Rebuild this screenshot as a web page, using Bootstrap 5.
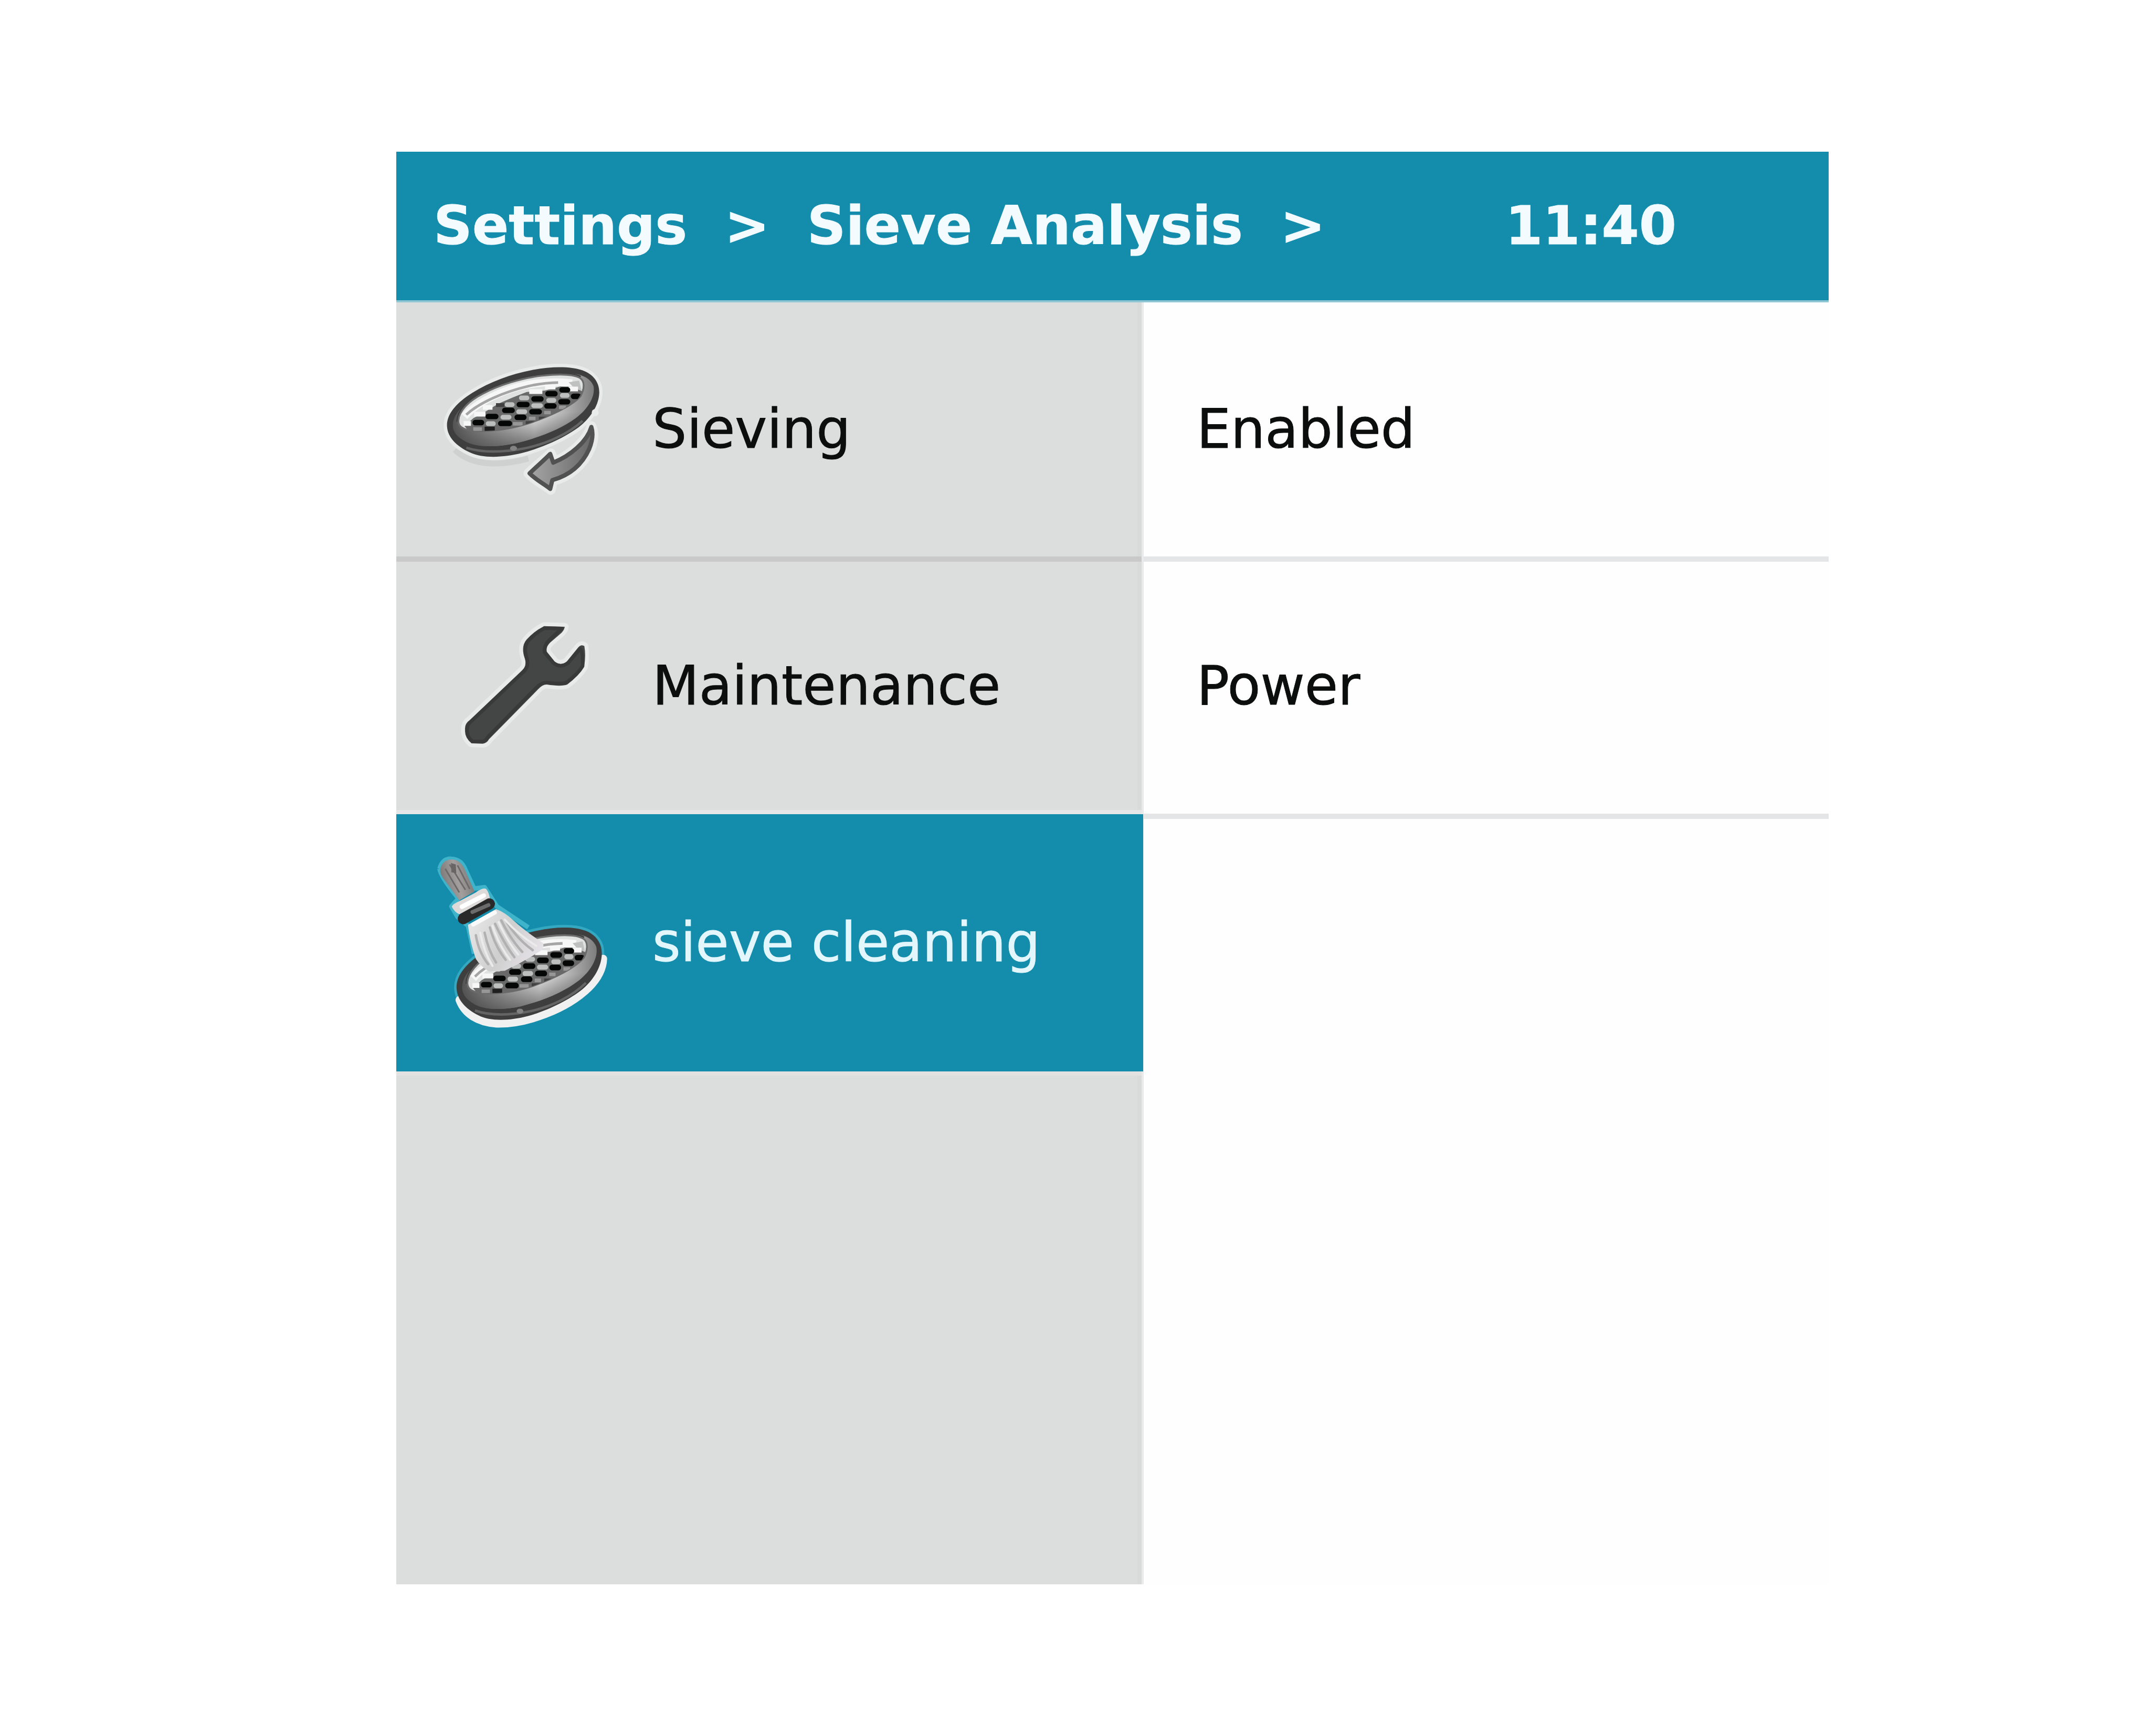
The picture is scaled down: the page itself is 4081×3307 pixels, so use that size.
<!DOCTYPE html>
<html lang="en">
<head>
    <meta charset="UTF-8">
    <meta name="viewport" content="width=device-width, initial-scale=1.0">
    <title>Settings - Sieve Analysis</title>
    <link href="https://cdn.jsdelivr.net/npm/bootstrap@5.3.0/dist/css/bootstrap.min.css" rel="stylesheet">
    <style>
        body {
            font-family: "DejaVu Sans", sans-serif;
            font-size: 103px;
            line-height: 1.2;
            color: #0c0d0d;
            background: #fff;
            padding: 289px 0 0 755px;
            -webkit-text-stroke: 1px currentColor;
        }
        .device-screen {
            width: 2729px;
            height: 2729px;
            background: #fefefe;
        }
        .top-bar {
            height: 287px;
            padding-left: 71px;
            padding-right: 290px;
            font-size: 102.4px;
            color: #f3fbff;
            background: #148dac;
            border-bottom: 4px solid #8fc6d3;
        }
        .crumbs {
            white-space: pre;
        }
        .side-menu {
            width: 1424px;
            background: #dbdedd;
            border-right: 4px solid #e9eaea;
            box-shadow: inset -8px 0 0 #d9dada;
        }
        .menu-row,
        .value-row {
            height: 494px;
            border-bottom: 10px solid #c9c9c9;
        }
        .menu-row svg {
            width: 485px;
            height: 100%;
            margin-right: 3px;
        }
        .menu-row.before-active {
            height: 481px;
            border-bottom: 8px solid #e6e5e8;
        }
        .menu-row.selected {
            height: 490px;
            width: 1423px;
            color: #e2f6fc;
            background: #148dac;
            border-bottom: 0;
        }
        .after-selected {
            height: 8px;
            background: #e3e2e1;
        }
        .value-row {
            padding-left: 101px;
            border-color: #e4e5e6;
        }
        .value-row.second {
            height: 490px;
            padding-bottom: 7px;
        }
    </style>
</head>
<body>
    <div class="device-screen d-flex flex-column">
        <header class="top-bar d-flex align-items-center justify-content-between fw-bold flex-shrink-0">
            <div class="crumbs">Settings  &gt;  Sieve Analysis  &gt;</div>
            <div>11:40</div>
        </header>

        <main class="d-flex flex-grow-1">
            <nav class="side-menu flex-shrink-0">
                <div class="menu-row d-flex align-items-center">
                    <svg viewBox="-195 -282 1455 1452" aria-hidden="true">
                        <defs>
                            <linearGradient id="rim" x1="0" y1="0" x2="1" y2="0">
                                <stop offset="0" stop-color="#525352"/>
                                <stop offset=".3" stop-color="#9a9b9a"/>
                                <stop offset=".58" stop-color="#dcdddc"/>
                                <stop offset=".8" stop-color="#b0b1b0"/>
                                <stop offset="1" stop-color="#7c7d7c"/>
                            </linearGradient>
                            <linearGradient id="rimShade" x1="0" y1="0" x2=".25" y2="1">
                                <stop offset=".7" stop-color="#333" stop-opacity="0"/>
                                <stop offset="1" stop-color="#333" stop-opacity=".5"/>
                            </linearGradient>
                            <linearGradient id="arrowFill" x1="0" y1="0" x2="1" y2="0">
                                <stop offset="0" stop-color="#a4a5a4"/>
                                <stop offset=".5" stop-color="#868786"/>
                                <stop offset="1" stop-color="#666766"/>
                            </linearGradient>
                            <path id="outerRing" d="M95 425C92 350 160 285 240 235C340 172 460 128 580 105C690 83 800 82 868 106C930 128 968 175 965 238C962 300 925 370 850 430C770 490 640 550 520 580C420 604 300 612 225 575C150 540 98 490 95 425Z"/>
                            <path id="opening" d="M160 395C162 340 220 280 300 240C390 192 520 150 640 137C730 127 815 128 855 150C885 170 880 215 858 255C810 310 680 370 560 410C450 445 320 462 225 450C180 440 160 425 160 395Z"/>
                            <clipPath id="openingClip"><use href="#opening"/></clipPath>
                            <!-- sieve pan, shared by both sieve icons -->
                            <g id="sieve">
                                <use href="#outerRing" fill="#3d3e3d"/>
                                <path d="M128 420C130 340 220 275 330 222C460 165 610 128 740 122C840 118 910 140 932 195C945 250 905 325 830 380C740 445 610 495 480 525C380 545 270 548 205 515C155 490 128 460 128 420Z" fill="url(#rim)"/>
                                <path d="M128 420C130 340 220 275 330 222C460 165 610 128 740 122C840 118 910 140 932 195C945 250 905 325 830 380C740 445 610 495 480 525C380 545 270 548 205 515C155 490 128 460 128 420Z" fill="url(#rimShade)"/>
                                <path d="M205 549C310 582 430 573 540 552C670 525 790 468 870 395" fill="none" stroke="#636463" stroke-width="14"/>
                                <ellipse cx="475" cy="552" rx="20" ry="14" fill="#818281"/>
                                <path d="M162 400C160 340 220 280 300 240C390 192 520 150 640 137C730 127 815 128 855 150" fill="none" stroke="#3d3e3d" stroke-width="26"/>
                                <use href="#opening" fill="#e0e2e1" stroke="#6a6b6a" stroke-width="10"/>
                                <g clip-path="url(#openingClip)">
                                    <path d="M195 370C270 285 420 215 560 188C650 172 730 170 810 180" fill="none" stroke="#f6f7f6" stroke-width="44"/>
                                    <path d="M205 360C280 290 420 230 560 197C620 183 680 177 730 176" fill="none" stroke="#a4a5a4" stroke-width="15"/>
                                    <path d="M790 175L850 165L868 235L820 205Z" fill="#bfc1c0"/>
                                    <path d="M195 425L245 380L310 345L390 296L470 262L550 230L655 222L745 198L805 200L890 235L860 320L560 450L240 480Z" fill="#686968"/>
                                    <g stroke="#bdbfbe" stroke-width="27" stroke-linecap="round">
                                        <path d="M330 411h30M414 374h36M504 343h36M590 308h40M676 278h30M520 264h32M438 302h30M754 250h28"/>
                                    </g>
                                    <path d="M250 357h65M300 318h55M565 228h75M655 202h60M745 185h34M190 410h42M790 213h54" stroke="#f6f7f6" stroke-width="27"/>
                                    <path d="M245 442h50M472 412h55M563 381h38M650 348h38M735 318h40" stroke="#969796" stroke-width="20"/>
                                    <g stroke="#050606" stroke-width="31" stroke-linecap="round">
                                        <path d="M256 405h36M330 370h44M425 335h42M508 302h44M592 270h40M672 240h40M752 218h32"/>
                                        <path d="M402 410h50M496 375h38M580 343h42M666 310h40M746 286h38M818 255h28"/>
                                    </g>
                                    <path d="M310 440h58" stroke="#1e1f1e" stroke-width="24"/>
                                    <path d="M375 305h48M545 408h50M620 382h54" stroke="#404140" stroke-width="22"/>
                                    <path d="M855 120C895 170 885 235 840 285" fill="none" stroke="#6c6d6c" stroke-width="16"/>
                                </g>
                            </g>
                        </defs>
                        <path d="M140 560C240 660 420 650 560 610" fill="none" stroke="#cfd0d0" stroke-width="34"/>
                        <use href="#outerRing" fill="none" stroke="#e9ebea" stroke-width="38"/>
                        <use href="#sieve"/>
                        <path d="M920 425C895 510 800 590 708 630L688 580C645 622 600 655 560 695C600 738 650 760 688 790L700 738C800 715 875 640 915 555C935 505 938 460 920 425Z" fill="none" stroke="#e9ebea" stroke-width="56" stroke-linejoin="round"/>
                        <path d="M920 430C895 515 800 595 702 634L685 584C645 625 605 658 567 695C605 735 650 755 685 784L697 734C800 705 870 640 908 555C928 505 930 460 920 430Z" fill="url(#arrowFill)" stroke="#505150" stroke-width="24" stroke-linejoin="round"/>
                        <circle cx="942" cy="348" r="20" fill="#eaebeb"/>
                    </svg>
                    <span>Sieving</span>
                </div>

                <div class="menu-row before-active d-flex align-items-center">
                    <svg viewBox="-255 -270 1455 1419" aria-hidden="true">
                        <path d="M590 98L708 102Q705 125 680 145L625 192Q598 218 606 245L650 300Q685 328 720 300L785 220Q802 200 820 212Q830 270 818 332Q790 380 722 432Q690 445 605 432Q580 432 555 460L275 745Q262 768 240 770L175 768Q135 735 138 690Q135 655 165 635L465 350Q492 325 480 285Q455 215 490 175Q535 125 590 98Z" fill="#444645" stroke="#e9ebea" stroke-width="44" stroke-linejoin="round" paint-order="stroke"/>
                        <path d="M592 110L690 112L618 180Q586 212 594 250L642 308Q685 342 728 308L795 228Q812 240 810 326Q785 370 718 420Q690 432 604 420Q575 420 545 450L268 732Q255 756 236 758L180 756Q146 730 150 690Q148 662 173 643L473 358Q504 330 492 283Q469 220 500 182Q540 138 592 110Z" fill="#444645" stroke="#383938" stroke-width="20" stroke-linejoin="round"/>
                    </svg>
                    <span>Maintenance</span>
                </div>

                <div class="menu-row selected d-flex align-items-center">
                    <svg viewBox="-135 -147 1455 1470" aria-hidden="true">
                        <defs>
                            <linearGradient id="bristles" x1="0" y1=".3" x2="1" y2=".7">
                                <stop offset="0" stop-color="#e6e6e6"/>
                                <stop offset=".5" stop-color="#cfcfcf"/>
                                <stop offset="1" stop-color="#e8e4ea"/>
                            </linearGradient>
                            <linearGradient id="handle" x1="0" y1=".6" x2="1" y2=".3">
                                <stop offset="0" stop-color="#777474"/>
                                <stop offset=".5" stop-color="#a39f9f"/>
                                <stop offset="1" stop-color="#757272"/>
                            </linearGradient>
                        </defs>
                        <g transform="translate(119 410) scale(.954 1.03)">
                            <use href="#outerRing" fill="none" stroke="#35a8c1" stroke-width="30"/>
                            <path d="M112 490C142 565 220 613 335 620C515 624 755 540 888 420C946 366 972 310 974 262" fill="none" stroke="#f1f1f2" stroke-width="46" stroke-linecap="round"/>
                            <use href="#sieve"/>
                        </g>
                        <path d="M112 165Q130 105 180 108Q235 110 258 165L310 278L370 270L440 380L620 500" fill="none" stroke="#3fb3ca" stroke-width="26" stroke-linejoin="round"/>
                        <path d="M112 165Q118 210 220 335L180 380L215 440L275 490L310 650" fill="none" stroke="#3fb3ca" stroke-width="26" stroke-linejoin="round"/>
                        <path d="M116 170Q128 112 182 112Q230 112 255 165L312 295L225 345L135 222Q115 195 116 170Z" fill="url(#handle)"/>
                        <path d="M145 165L225 300M170 140L260 285M215 145L285 280" stroke="#6c6969" stroke-width="9" fill="none"/>
                        <path d="M178 132L205 140L208 190L180 185Z" fill="#686565"/>
                        <path d="M182 380Q190 365 225 350L320 300Q360 270 378 280Q395 300 400 335L225 425Q195 410 182 380Z" fill="#dedada"/>
                        <path d="M240 382L365 318" stroke="#fff" stroke-width="26" stroke-linecap="round"/>
                        <path d="M275 485L435 395Q490 415 540 465Q600 520 705 590Q712 622 680 640L640 665L560 710L485 748L395 752Q345 720 320 680Q285 580 275 485Z" fill="url(#bristles)"/>
                        <path d="M305 483L428 415" stroke="#fafafa" stroke-width="24" stroke-linecap="round"/>
                        <g fill="none" stroke="#b1b1b2" stroke-width="14" stroke-linecap="round">
                            <path d="M320 545Q335 640 390 710M370 530Q390 630 435 700M400 500Q430 610 490 685"/>
                            <path d="M430 480Q480 590 540 670M465 460Q520 570 585 640M500 475Q560 570 645 630"/>
                        </g>
                        <g fill="none" stroke="#ebebeb" stroke-width="12" stroke-linecap="round">
                            <path d="M345 530Q365 640 415 720M415 490Q450 600 515 685M450 470Q500 580 562 655M485 455Q560 540 665 605"/>
                        </g>
                        <path d="M248 450L397 366" stroke="#292929" stroke-width="64" stroke-linecap="round"/>
                        <path d="M300 412L392 372" stroke="#6b6b6b" stroke-width="22" stroke-linecap="round"/>
                    </svg>
                    <span>sieve cleaning</span>
                </div>
                <div class="after-selected"></div>
            </nav>

            <section class="flex-grow-1">
                <div class="value-row d-flex align-items-center">Enabled</div>
                <div class="value-row second d-flex align-items-center">Power</div>
            </section>
        </main>
    </div>

    <script src="https://cdn.jsdelivr.net/npm/bootstrap@5.3.0/dist/js/bootstrap.bundle.min.js"></script>
</body>
</html>
